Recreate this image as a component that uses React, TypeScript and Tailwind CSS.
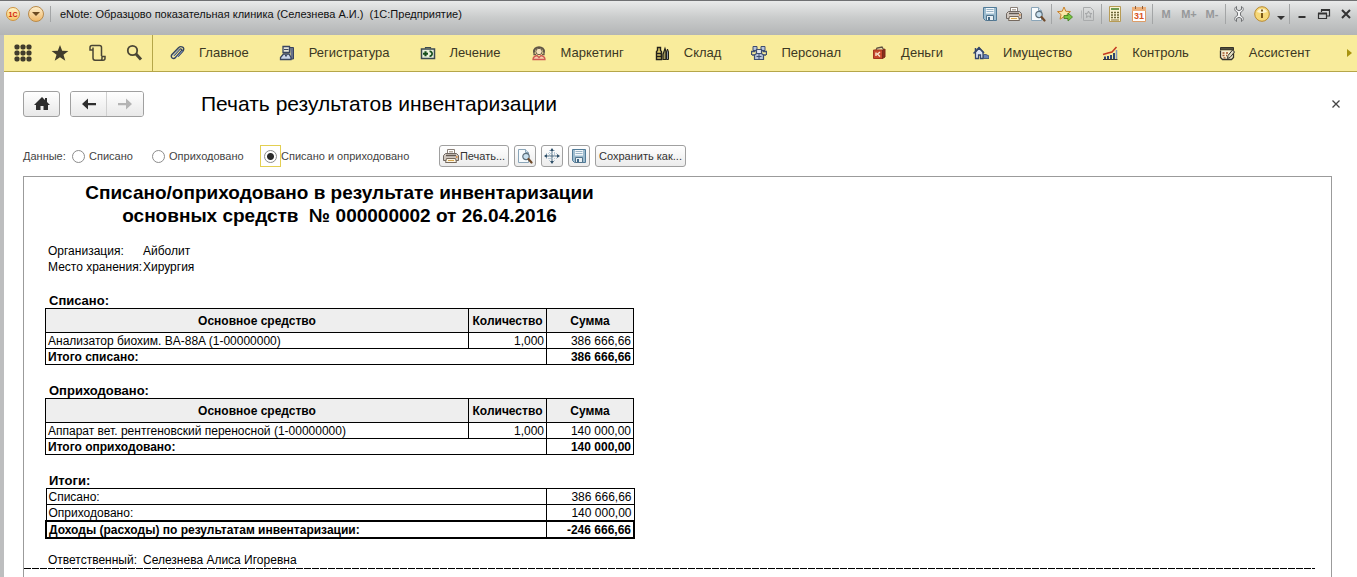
import React, { useState } from 'react';

type IconProps = { className?: string };

const Svg: React.FC<{ className?: string; children: React.ReactNode }> = ({ className = 'w-4 h-4', children }) => (
  <svg viewBox="0 0 16 16" fill="none" className={`${className} shrink-0`} aria-hidden="true">
    {children}
  </svg>
);

const SaveIcon: React.FC<IconProps> = ({ className }) => (
  <Svg className={className}>
    <path d="M1.5 1.5h13v13h-11l-2-2z" fill="#9dbccf" stroke="#517b98" />
    <path d="M4 2h8v5.500H4z" fill="#f3f8fb" />
    <path d="M4.500 3.500h7M4.500 5.500h7" stroke="#9ab4c6" />
    <path d="M4.500 9.500h7v5h-7z" fill="#e9f0f4" stroke="#52748c" />
    <path d="M6 11h2v3H6z" fill="#416987" />
  </Svg>
);

const PrintIcon: React.FC<IconProps> = ({ className }) => (
  <Svg className={className}>
    <path d="M4.500 6V1.500h7V6" fill="#fff" stroke="#8a8078" />
    <path d="M6 3.500h4M6 5h4" stroke="#b5aaa0" />
    <path d="M2.500 5.500h11l2 2v5h-15v-5z" fill="#d0c8c0" stroke="#6f6761" />
    <path d="M3 7.500h10" stroke="#625951" strokeWidth="1.400" />
    <path d="M3.500 10.500h9l1 4h-11z" fill="#fdf6e4" stroke="#75695f" />
    <path d="M5 12.500h6" stroke="#d8a64c" />
    <path d="M13 9h1.500" stroke="#d9822e" strokeWidth="1.400" />
  </Svg>
);

const PreviewIcon: React.FC<IconProps> = ({ className }) => (
  <Svg className={className}>
    <path d="M1.500 1.500h7l3 3v10h-10z" fill="#f7fbfd" stroke="#8aa5b8" />
    <path d="M8.500 1.500v3h3" fill="#d5e3ec" stroke="#8aa5b8" />
    <circle cx="9" cy="8.500" r="3.200" fill="#c7dfee" stroke="#5d6f7b" strokeWidth="1.200" />
    <path d="M11.500 11l3 3.500" stroke="#704a2a" strokeWidth="2.200" strokeLinecap="round" />
  </Svg>
);

const AddFavoriteIcon = () => (
  <Svg>
    <path d="M7 1l1.800 4.300 4.700.3-3.600 3 1.200 4.600L7 10.700l-4 2.500 1.100-4.600-3.600-3 4.700-.3z" fill="#fbe6a8" stroke="#c8812c" />
    <path d="M7 9.500h4V7l4.500 4-4.500 4v-2.500H7z" fill="#79c33f" stroke="#3d7d1c" strokeWidth=".8" />
  </Svg>
);

const DocStarIcon = () => (
  <Svg>
    <path d="M3.500 1.500h7l3 3v10h-10z" stroke="#a9abac" />
    <path d="M1.500 4.500v8" stroke="#b5b7b8" />
    <path d="M8.500 5l1 2.300 2.400.2-1.800 1.600.6 2.400-2.200-1.300-2.100 1.300.5-2.400-1.800-1.600 2.500-.2z" stroke="#a2a4a5" />
  </Svg>
);

const CalcIcon = () => (
  <Svg>
    <path d="M2.500.5h11v15h-11z" fill="#faf2d0" stroke="#b79b54" />
    <path d="M4 2h8v2H4z" fill="#6c9a52" />
    <path d="M4 6.500h2M7 6.500h2M10 6.500h2M4 9h2M7 9h2M10 9h2M4 11.500h2M7 11.500h2M10 11.500h2" stroke="#6d6638" strokeWidth="1.400" />
    <path d="M4 14h8" stroke="#85713c" />
  </Svg>
);

const CalendarIcon = () => (
  <Svg>
    <path d="M1.500 1.500h13v14h-13z" fill="#fff" stroke="#dd9d68" />
    <path d="M1 1h14v4H1z" fill="#eeb07a" />
    <path d="M4.500 0v3M11.500 0v3" stroke="#8d5d39" />
    <text x="8" y="13" textAnchor="middle" fontSize="9" fontWeight="700" fontFamily="Liberation Sans, sans-serif" fill="#d9541e">
      31
    </text>
  </Svg>
);

const WrenchIcon = () => (
  <Svg>
    <path
      d="M5.500.5C3.500 1.500 3 4 5 5.500l1.500 1v3L5 10.500c-2 1.500-1.500 4 .5 5V12.500L8 11.300l2.500 1.200v3c2-1 2.500-3.500.5-5l-1.500-1v-3l1.500-1c2-1.500 1.500-4-.5-5v3L8 4.700 5.500 3.500z"
      fill="#f1f2f3"
      stroke="#6f7173"
      strokeWidth="1"
    />
  </Svg>
);

const InfoIcon = () => (
  <Svg>
    <circle cx="8" cy="8" r="7.300" fill="#f6d878" stroke="#b98a30" />
    <path d="M3 6a5.500 5.500 0 0 1 10 0c-3 1.500-7 1.500-10 0z" fill="#fdf3cd" />
    <path d="M8 7v5M8 3.500v2" stroke="#6d4b10" strokeWidth="1.800" />
  </Svg>
);

const ClipIcon = () => (
  <Svg>
    <path
      d="M5 10.500l5.500-6c1.400-1.400 3 .1 1.800 1.500L6.500 12.500c-2 2.200-5.800 0-3.500-3L9.500 2.800c2.500-2.500 7-.3 4.500 3.200L9 11.500"
      stroke="#33435f"
      strokeWidth="1.400"
    />
    <path d="M3.800 11.200l6.500-7M7.500 12.500l5.800-6.500" stroke="#9fb4dd" strokeWidth=".9" />
  </Svg>
);

const RegistryIcon = () => (
  <Svg>
    <path d="M11 2.500h3.500v11.500H12" fill="#67718a" stroke="#39445f" />
    <path d="M4 1.500h6.500v6H4z" fill="#e4e4d8" stroke="#39445f" strokeWidth="1.300" />
    <path d="M5 4.500h4.500" stroke="#39445f" />
    <path d="M1.500 14.500v-2l3-3.500H10l2 3.500v2z" fill="#c9d4ea" stroke="#39445f" strokeWidth="1.300" />
    <path d="M6 9.500l1 2 1.200-2" stroke="#39445f" />
  </Svg>
);

const TreatmentIcon = () => (
  <Svg>
    <path d="M5.500 3.500v-1h5v1" stroke="#3b4a50" strokeWidth="1.200" />
    <path d="M1.500 4h13v9.500h-13z" fill="#e9f0dc" stroke="#3b4a50" strokeWidth="1.500" />
    <path d="M3 8.700h5M5.500 6.200v5" stroke="#174f1c" strokeWidth="2.100" />
    <path d="M9.500 6.500c3.500-.5 3.500 5 0 4.500" stroke="#174f1c" strokeWidth="1.700" />
  </Svg>
);

const MarketingIcon = () => (
  <Svg>
    <path d="M3 7.500C2 .5 14 .5 13 7.500" stroke="#5f5545" strokeWidth="2" />
    <circle cx="8" cy="6.500" r="3.200" fill="#f5e3bd" stroke="#66594a" />
    <path d="M3 7v2.500h2M13 7v2.500h-2" stroke="#66594a" strokeWidth="1.300" />
    <path d="M2 14.500c0-3 2-3.500 4-4l2 2 2-2c2 .5 4 1 4 4z" fill="#f8cfae" stroke="#cf5a50" strokeWidth="1.300" />
  </Svg>
);

const WarehouseIcon = () => (
  <Svg>
    <path d="M2.500 14.500v-8l1-1v-3h3v3l1 1v8z" fill="#dcc968" stroke="#23211a" strokeWidth="1.400" />
    <path d="M2.500 8.500h5v3h-5" stroke="#23211a" strokeWidth="1.400" />
    <path d="M9 14.500v-5l2-6 1 3v8z" fill="#a39a5c" stroke="#23211a" strokeWidth="1.200" />
    <path d="M12.500 14.500V7l1-3 1 3v7.500z" fill="#8a94a4" stroke="#23211a" />
  </Svg>
);

const StaffIcon = () => (
  <Svg>
    <path d="M2 1.500h4v4H2zM10 1.500h4v4h-4z" fill="#b7c3d9" stroke="#3e4e70" />
    <path d="M.5 10V6.500h4M15.500 10V6.500h-4M1 10h3M12 10h3" stroke="#3e4e70" strokeWidth="1.300" />
    <path d="M5.500 4.500h5v4h-5z" fill="#e2e6ec" stroke="#3e4e70" strokeWidth="1.200" />
    <path d="M3.500 14.500V10l2-1.500h5l2 1.500v4.500z" fill="#b7c3d9" stroke="#3e4e70" strokeWidth="1.200" />
    <path d="M8 9v5M5.500 11.500h5" stroke="#3e4e70" />
  </Svg>
);

const MoneyIcon = () => (
  <Svg>
    <path d="M5 5l1-2 5-1 1.500 2.500" fill="#e8dcae" stroke="#5d5040" strokeWidth="1.300" />
    <path d="M2.500 5h9v8.500h-9z" fill="#c7492c" stroke="#a2341e" />
    <path d="M11.500 5l2.500-1v8l-2.500 1.500z" fill="#8c2c1a" stroke="#7a2a18" />
    <path d="M5 7.500v3.500M9 7l-2.500 2L9 11.500" stroke="#fae9d2" strokeWidth="1.400" />
  </Svg>
);

const PropertyIcon = () => (
  <Svg>
    <path d="M2.500 13.500V7L6 3l4 4v6.500H7.500V10h-2v3.500z" fill="#dfe6f2" stroke="#34466b" strokeWidth="1.300" />
    <path d="M.5 8.500L6 2.500l5 5.500" stroke="#34466b" strokeWidth="1.500" />
    <path d="M10.500 9.500H13l3 1.500v2.500h-5.500z" fill="#6a84b8" stroke="#34466b" strokeWidth=".8" />
    <path d="M2.500 3v3" stroke="#34466b" strokeWidth="1.500" />
  </Svg>
);

const ControlIcon = () => (
  <Svg>
    <path d="M1 14.500h14.500" stroke="#3a3630" />
    <path d="M3 14v-2.500M6 14v-3M9 14v-4M12 14V8" stroke="#2e4570" strokeWidth="2" />
    <path d="M14.500 14V5" stroke="#8798b8" strokeWidth="1.500" />
    <path d="M1 9.500l5-1.500 4-1L14.500 2" stroke="#c43a22" strokeWidth="1.500" />
  </Svg>
);

const AssistantIcon = () => (
  <Svg>
    <path d="M1.500 2.500h13v2.500h-13z" fill="#53503f" stroke="#35332a" />
    <path d="M1.500 5.500v7l2 2h9l2-2v-7" fill="#f6efd0" stroke="#35332a" strokeWidth="1.300" />
    <path d="M3.500 8h2M7 8h2M3.500 10.500h2M7 10.500h1M4.500 12.800h2" stroke="#a3552c" strokeWidth="1.300" />
    <path d="M8.500 13.500l.5-3 4.500-5.500 2 2-4.500 5.500z" fill="#e2ddc2" stroke="#35332a" />
  </Svg>
);

const GridIcon = () => (
  <svg viewBox="0 0 18 18" className="w-[18px] h-[18px]" fill="#403c2c" aria-hidden="true">
    {[3, 9, 15].map((y) =>
      [3, 9, 15].map((x) => <rect key={`${x}-${y}`} x={x - 2.5} y={y - 2.5} width="5" height="5" rx="1.800" />)
    )}
  </svg>
);

const StarIcon = () => (
  <svg viewBox="0 0 18 18" className="w-[18px] h-[18px]" fill="#403c2c" aria-hidden="true">
    <path d="M9 1l2.200 5.700 6.200.2-4.900 3.800 1.800 6L9 13.300l-5.300 3.400 1.800-6L.6 6.900l6.200-.2z" />
  </svg>
);

const HistoryIcon = () => (
  <svg viewBox="0 0 18 18" className="w-[18px] h-[18px]" fill="none" stroke="#4a4635" strokeWidth="1.500" aria-hidden="true">
    <path d="M5 6H2V3.500c0-1.300.8-2 2-2h7.500c1.200 0 2 .8 2 2V12" />
    <path d="M5 3.500V14c0 1.500.8 2.200 2 2.200h8c1.200 0 2-.8 2-2V12.500h-3v1.700c0 1.300-.6 2-1.500 2" />
  </svg>
);

const SearchIcon = () => (
  <svg viewBox="0 0 18 18" className="w-[18px] h-[18px]" fill="none" stroke="#4a4635" aria-hidden="true">
    <circle cx="7.500" cy="6.500" r="4.700" strokeWidth="1.800" />
    <path d="M11 10l5 5.500" strokeWidth="3" />
  </svg>
);

const sections = [
  { label: 'Главное', icon: ClipIcon },
  { label: 'Регистратура', icon: RegistryIcon },
  { label: 'Лечение', icon: TreatmentIcon },
  { label: 'Маркетинг', icon: MarketingIcon },
  { label: 'Склад', icon: WarehouseIcon },
  { label: 'Персонал', icon: StaffIcon },
  { label: 'Деньги', icon: MoneyIcon },
  { label: 'Имущество', icon: PropertyIcon },
  { label: 'Контроль', icon: ControlIcon },
  { label: 'Ассистент', icon: AssistantIcon },
];

const Separator = () => <span className="w-px h-5 mx-[5px] bg-[#a3a5a6]" />;

const TitleButton: React.FC<{ title: string; children: React.ReactNode }> = ({ title, children }) => (
  <button aria-label={title} className="w-4 h-4 flex items-center justify-center shrink-0">
    {children}
  </button>
);

const TitleBar = () => (
  <header className="h-[35px] pb-2 pl-[6px] pr-[3px] flex items-center border-t border-[#6f7072] bg-linear-to-b from-[#e9eaea] via-[#c9cbcb] via-50% to-[#b3b5b6]">
    <button
      aria-label="Главное меню"
      className="w-[14px] h-[14px] rounded-full border border-[#cf9440] bg-linear-to-b from-[#fff3c4] to-[#f6c667] flex items-center justify-center text-[7px] leading-none font-bold text-[#d01f10]"
    >
      1C
    </button>
    <button
      aria-label="Меню окна"
      className="w-4 h-4 ml-2 rounded-full border border-[#b98a48] bg-linear-to-b from-[#fdeecb] to-[#efb868] flex items-center justify-center"
    >
      <svg viewBox="0 0 8 4" className="w-2 h-1" aria-hidden="true">
        <path d="M0 0h8L4 4z" fill="#6b4a22" />
      </svg>
    </button>
    <span className="w-px h-4 ml-[6px] mr-[9px] bg-[#a3a5a6]" />
    <h1 className="text-[11px] text-[#111] whitespace-pre">
      {'eNote: Образцово показательная клиника (Селезнева А.И.)  (1С:Предприятие)'}
    </h1>
    <div className="ml-auto flex items-center">
      <div className="flex gap-2">
        <TitleButton title="Сохранить"><SaveIcon /></TitleButton>
        <TitleButton title="Печать"><PrintIcon /></TitleButton>
        <TitleButton title="Просмотр"><PreviewIcon /></TitleButton>
      </div>
      <Separator />
      <div className="flex gap-[7px]">
        <TitleButton title="Добавить в избранное"><AddFavoriteIcon /></TitleButton>
        <TitleButton title="Избранное"><DocStarIcon /></TitleButton>
      </div>
      <Separator />
      <div className="flex gap-2">
        <TitleButton title="Калькулятор"><CalcIcon /></TitleButton>
        <TitleButton title="Календарь"><CalendarIcon /></TitleButton>
      </div>
      <Separator />
      <div className="flex gap-[7px] text-[11px] font-bold text-[#96989a]">
        {['M', 'M+', 'M-'].map((key) => (
          <TitleButton key={key} title={key}>{key}</TitleButton>
        ))}
      </div>
      <Separator />
      <div className="flex items-center gap-[7px]">
        <TitleButton title="Настройка"><WrenchIcon /></TitleButton>
        <TitleButton title="О программе"><InfoIcon /></TitleButton>
        <svg viewBox="0 0 8 8" className="w-2 h-2 mt-2" aria-hidden="true">
          <path d="M0 2h8L4 6z" fill="#333" />
        </svg>
      </div>
      <span className="w-px h-5 mx-1 bg-[#a3a5a6]" />
      <div className="flex gap-[6px]">
        <TitleButton title="Свернуть">
          <Svg><path d="M4.500 11h7" stroke="#333" strokeWidth="2" /></Svg>
        </TitleButton>
        <TitleButton title="Развернуть">
          <Svg>
            <path d="M5.500 6V4h8v6H11" stroke="#333" strokeWidth="1.200" />
            <path d="M5 4h9" stroke="#333" strokeWidth="2" />
            <path d="M2.500 7.500h8v5h-8z" stroke="#333" strokeWidth="1.200" />
            <path d="M2 7.500h9" stroke="#333" strokeWidth="2" />
          </Svg>
        </TitleButton>
        <TitleButton title="Закрыть">
          <Svg><path d="M4 4l8 8M12 4l-8 8" stroke="#333" strokeWidth="2" /></Svg>
        </TitleButton>
      </div>
    </div>
  </header>
);

const SectionBar = () => (
  <nav className="h-[37px] flex bg-[#f9ec9c] border-b border-[#b5a649] text-[13px] text-[#3c3823]">
    <div className="w-[149px] pl-[10px] flex items-center gap-[19px] border-r border-[#b5a649] shrink-0">
      <button aria-label="Меню функций"><GridIcon /></button>
      <button aria-label="Избранное"><StarIcon /></button>
      <button aria-label="История"><HistoryIcon /></button>
      <button aria-label="Поиск"><SearchIcon /></button>
    </div>
    <div className="flex-1 pl-4 flex items-center gap-[30px] overflow-hidden">
      {sections.map(({ label, icon: Icon }) => (
        <a key={label} href="#" className="flex items-center gap-[14px] shrink-0">
          <Icon />
          {label}
        </a>
      ))}
    </div>
    <button aria-label="Далее" className="px-1">
      <svg viewBox="0 0 6 10" className="w-[6px] h-[10px]" aria-hidden="true">
        <path d="M0 1l5 4-5 4z" fill="#a8930f" />
      </svg>
    </button>
  </nav>
);

const buttonClass =
  'h-[22px] flex items-center justify-center rounded-[3px] border border-[#a0a0a0] bg-linear-to-b from-white to-[#ececec]';

const navClass = 'h-[26px] flex items-center justify-center bg-linear-to-b from-white to-[#e8e8e8]';

const choices = [
  { value: 'off', label: 'Списано', width: 'w-[80px]' },
  { value: 'on', label: 'Оприходовано', width: 'w-[112px]' },
  { value: 'both', label: 'Списано и оприходовано', width: 'w-[169px]' },
];

const Toolbar = () => {
  const [choice, setChoice] = useState('both');

  return (
    <div className="flex items-center text-[11px] text-[#444]">
      <fieldset className="flex items-center">
        <legend className="float-left w-[45px] whitespace-nowrap">Данные:</legend>
        {choices.map(({ value, label, width }) => (
          <label key={value} className={`${width} flex items-center shrink-0 whitespace-nowrap`}>
            <span
              className={`w-[21px] h-[22px] flex items-center justify-center border ${
                choice === value ? 'border-[#e3cf52]' : 'border-transparent'
              }`}
            >
              <input
                type="radio"
                name="data"
                value={value}
                checked={choice === value}
                onChange={() => setChoice(value)}
                className="appearance-none w-[13px] h-[13px] rounded-full border border-[#8c8c8c] bg-white checked:bg-[radial-gradient(circle,#2b2b2b_3px,#fff_4px)]"
              />
            </span>
            {label}
          </label>
        ))}
      </fieldset>
      <div className="ml-[10px] flex gap-[5px] text-[#333]">
        <button className={`${buttonClass} w-[70px] gap-px whitespace-nowrap`}>
          <PrintIcon />
          Печать...
        </button>
        <button aria-label="Просмотр" className={`${buttonClass} w-[22px]`}><PreviewIcon /></button>
        <button aria-label="Параметры страницы" className={`${buttonClass} w-[22px]`}>
          <Svg>
            <path d="M8 1v14M1 8h14" stroke="#4c6a80" />
            <path d="M5.500 2v12M10.500 2v12M2 5.500h12M2 10.500h12" stroke="#b9cbd8" strokeDasharray="1 1" />
            <path d="M8 0l2 3H6zM8 16l2-3H6zM0 8l3-2v4zM16 8l-3-2v4z" fill="#2f5069" />
          </Svg>
        </button>
        <button aria-label="Сохранить" className={`${buttonClass} w-[22px]`}><SaveIcon /></button>
        <button className={`${buttonClass} w-[91px] whitespace-nowrap`}>Сохранить как...</button>
      </div>
    </div>
  );
};

const cellText = 'px-[2px] pt-px pb-0 leading-[14px]';
const cell = `border border-black ${cellText}`;
const groupTitle = 'pl-1 text-[13px] leading-[15px] font-bold';

const AssetTable: React.FC<{ title: string; name: string; sum: string; total: string }> = ({ title, name, sum, total }) => (
  <section className="mt-[18px]">
    <h3 className={groupTitle}>{title}</h3>
    <table className="w-[589px] table-fixed border-collapse">
      <colgroup>
        <col />
        <col className="w-[78px]" />
        <col className="w-[87px]" />
      </colgroup>
      <thead>
        <tr className="h-6 bg-[#eeeeee]">
          <th className={cell}>Основное средство</th>
          <th className={cell}>Количество</th>
          <th className={cell}>Сумма</th>
        </tr>
      </thead>
      <tbody>
        <tr className="h-4">
          <td className={cell}>{name}</td>
          <td className={`${cell} text-right`}>1,000</td>
          <td className={`${cell} text-right`}>{sum}</td>
        </tr>
        <tr className="h-4 font-bold">
          <td className={cell} colSpan={2}>{total}</td>
          <td className={`${cell} text-right`}>{sum}</td>
        </tr>
      </tbody>
    </table>
  </section>
);

const Report = () => (
  <article className="pt-1 text-[12px] text-black">
    <div className="pl-[21px]">
      <h2 className="w-[589px] text-center text-[19px] leading-[23px] font-bold whitespace-pre">
        {'Списано/оприходовано в результате инвентаризации\nосновных средств  № 000000002 от 26.04.2016'}
      </h2>
      <dl className="mt-4 pl-[3px] grid grid-cols-[95px_1fr] leading-4 whitespace-nowrap">
        <dt>Организация:</dt>
        <dd>Айболит</dd>
        <dt>Место хранения:</dt>
        <dd>Хирургия</dd>
      </dl>
      <AssetTable
        title="Списано:"
        name="Анализатор биохим. BA-88A (1-00000000)"
        sum="386 666,66"
        total="Итого списано:"
      />
      <AssetTable
        title="Оприходовано:"
        name="Аппарат вет. рентгеновский переносной (1-00000000)"
        sum="140 000,00"
        total="Итого оприходовано:"
      />
      <section className="mt-[18px]">
        <h3 className={groupTitle}>Итоги:</h3>
        <table className="w-[590px] table-fixed border-collapse">
          <colgroup>
            <col />
            <col className="w-[88px]" />
          </colgroup>
          <tbody>
            <tr className="h-4">
              <td className={cell}>Списано:</td>
              <td className={`${cell} text-right`}>386 666,66</td>
            </tr>
            <tr className="h-4">
              <td className={cell}>Оприходовано:</td>
              <td className={`${cell} text-right`}>140 000,00</td>
            </tr>
            <tr className="h-[17px] font-bold border-2 border-black">
              <td className={cellText}>Доходы (расходы) по результатам инвентаризации:</td>
              <td className={`${cellText} text-right border-l border-black`}>-246 666,66</td>
            </tr>
          </tbody>
        </table>
      </section>
      <p className="mt-[14px] pl-[3px] flex leading-[15px]">
        <span className="w-[95px]">Ответственный:</span>
        Селезнева Алиса Игоревна
      </p>
    </div>
    <div className="mr-4 h-px bg-[repeating-linear-gradient(90deg,#000_0_7px,#fff_7px_8px)]" />
  </article>
);

const App: React.FC = () => (
  <div className="min-h-screen flex flex-col bg-white font-['Liberation_Sans',Arial,sans-serif]">
    <TitleBar />
    <div className="flex-1 flex flex-col border-l-4 border-[#bdbebf]">
      <SectionBar />
      <main className="flex-1 flex flex-col pt-[19px] pl-[19px] pr-[25px]">
        <div className="flex items-center">
          <button aria-label="Начальная страница" className={`${navClass} w-[37px] rounded-[3px] border border-[#a0a0a0]`}>
            <svg viewBox="0 0 16 14" className="w-4 h-[14px]" aria-hidden="true">
              <path d="M8 0l3 3V1h2v4l3 3h-2v5H9.500V9h-3v4H2V8H0z" fill="#2e2e2e" />
            </svg>
          </button>
          <div className="ml-[10px] flex rounded-[3px] border border-[#a0a0a0] overflow-hidden">
            <button aria-label="Назад" className={`${navClass} -my-px w-9 border-r border-[#d0d0d0]`}>
              <svg viewBox="0 0 16 12" className="w-4 h-3" aria-hidden="true">
                <path d="M1 6L7 .5V5h8v2.200H7v4.300z" fill="#2e2e2e" />
              </svg>
            </button>
            <button aria-label="Вперед" className={`${navClass} -my-px w-9`}>
              <svg viewBox="0 0 16 12" className="w-4 h-3" aria-hidden="true">
                <path d="M15 6L9 .5V5H1v2.200h8v4.300z" fill="#b4b4b4" />
              </svg>
            </button>
          </div>
          <h2 className="ml-[57px] text-[21px] leading-6 text-black">Печать результатов инвентаризации</h2>
          <button aria-label="Закрыть форму" className="ml-auto -mr-3">
            <Svg><path d="M4.500 4.500l7 7M11.500 4.500l-7 7" stroke="#444" strokeWidth="1.300" /></Svg>
          </button>
        </div>
        <div className="mt-7">
          <Toolbar />
        </div>
        <div className="mt-[9px] flex-1 border border-b-0 border-[#9b9b9b]">
          <Report />
        </div>
      </main>
    </div>
  </div>
);

export default App;
